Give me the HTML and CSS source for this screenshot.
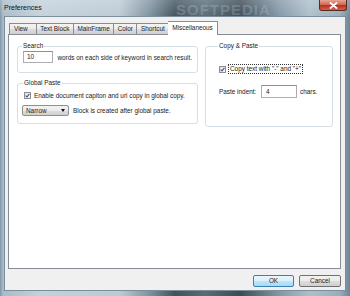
FILE: index.html
```html
<!DOCTYPE html>
<html lang="en">
<head>
  <meta charset="UTF-8">
  <title>Preferences</title>
  <link rel="stylesheet" href="styles.css">
</head>
<body>

<div class="window">
  <!-- Title bar -->
  <div class="titlebar">
    <span class="title">Preferences</span>
    <span class="watermark-top">SOFTPEDIA</span>
    <div class="close">
      <svg width="9" height="7" viewBox="0 0 9 7"><path d="M1.5 1 L7.5 6 M7.5 1 L1.5 6" stroke="#fff" stroke-width="1.8" stroke-linecap="round"/></svg>
    </div>
  </div>

  <!-- Client area -->
  <div class="client">
    <div class="tabs">
      <div class="tab tab-view">View</div>
      <div class="tab">Text Block</div>
      <div class="tab">MainFrame</div>
      <div class="tab">Color</div>
      <div class="tab">Shortcut</div>
      <div class="tab active">Miscellaneous</div>
    </div>

    <div class="panel">
      <div class="col-left">
        <fieldset class="group group-search">
          <legend>Search</legend>
          <div class="row">
            <div class="textbox tb-search">10</div>
            <span>words on each side of keyword in search result.</span>
          </div>
        </fieldset>

        <fieldset class="group group-global">
          <legend>Global Paste</legend>
          <div class="row">
            <span class="check">
              <svg width="5" height="5" viewBox="0 0 5 5"><path d="M0.6 2.6 L2 4 L4.4 0.8" fill="none" stroke="#3c5a8c" stroke-width="1.1"/></svg>
            </span>
            <span>Enable document capiton and url copy in global copy.</span>
          </div>
          <div class="row row-select">
            <div class="select">
              <span>Narrow</span>
              <span class="arrow"></span>
            </div>
            <span>Block is created after global paste.</span>
          </div>
        </fieldset>
      </div>

      <fieldset class="group group-copy">
        <legend>Copy &amp; Paste</legend>
        <div class="row">
          <span class="check">
            <svg width="5" height="5" viewBox="0 0 5 5"><path d="M0.6 2.6 L2 4 L4.4 0.8" fill="none" stroke="#3c5a8c" stroke-width="1.1"/></svg>
          </span>
          <span class="focus">Copy text with "-" and "+"</span>
        </div>
        <div class="row row-indent">
          <span class="indent-label">Paste indent:</span>
          <div class="textbox tb-indent">4</div>
          <span>chars.</span>
        </div>
      </fieldset>
    </div>

    <div class="buttons">
      <div class="btn btn-ok">OK</div>
      <div class="btn">Cancel</div>
    </div>
  </div>
</div>

</body>
</html>
```

FILE: styles.css
```css
body {
  margin: 0;
  padding: 0;
  width: 350px;
  height: 296px;
  overflow: hidden;
  font-family: 'Liberation Sans', Arial, sans-serif;
  font-size: 6.4px;
  color: #222;
}
.window {
  width: 350px;
  height: 296px;
  display: flex;
  flex-direction: column;
  box-sizing: border-box;
  background:
    linear-gradient(180deg, rgba(255,255,255,0.2) 0px, rgba(255,255,255,0) 18px),
    linear-gradient(90deg, #7f97a8 0px, #a9bbc8 3px, #c4d1db 40px, #bccad5 120px, #7d91a0 150px, #41525e 175px, #5a6c79 205px, #3b4b56 240px, #8499a8 280px, #aebfcb 310px, #98adbb 340px, #6d8596 350px);
}
.titlebar {
  height: 16px;
  display: flex;
  align-items: flex-start;
  position: relative;
  padding-left: 4px;
}
.title {
  font-size: 7px;
  margin-top: 4px;
  color: #111;
}
.watermark-top {
  position: absolute;
  left: 176px;
  top: 1px;
  font-size: 15px;
  font-weight: bold;
  letter-spacing: 1px;
  color: rgba(200,214,224,0.25);
}
.close {
  margin-left: auto;
  margin-right: 3px;
  width: 28px;
  height: 11px;
  border: 1px solid #5a2a22;
  border-top: none;
  border-radius: 0 0 3px 3px;
  box-sizing: border-box;
  background: linear-gradient(180deg, #e8a493 0%, #d06a56 45%, #b8331e 55%, #d5604a 100%);
  display: flex;
  align-items: center;
  justify-content: center;
}
.client {
  flex: 1;
  margin: 0 4px 5px 4px;
  background: #f0f0f0;
  border: 1px solid #7a8e9c;
  display: flex;
  flex-direction: column;
  padding: 4px 4px 3px 3px;
}
.tabs {
  display: flex;
  align-items: flex-end;
  height: 13px;
  padding-left: 1px;
  position: relative;
  z-index: 1;
}
.tab {
  height: 11px;
  box-sizing: border-box;
  padding: 0 3.5px;
  border: 1px solid #898c95;
  border-bottom: none;
  border-right: none;
  background: linear-gradient(180deg, #f3f3f3 0%, #ebebeb 50%, #dddddd 51%, #cfcfcf 100%);
  line-height: 10px;
  white-space: nowrap;
}
.tab-view {
  padding: 0 8px 0 4px;
}
.tab:nth-child(5) {
  border-right: 1px solid #898c95;
}
.tab.active {
  height: 14px;
  margin-bottom: -1px;
  margin-left: -1px;
  background: #fff;
  border-right: 1px solid #898c95;
  border-left: none;
  padding: 0 4px;
  line-height: 12px;
}
.panel {
  flex: 1;
  background: #fff;
  border: 1px solid #898c95;
  display: flex;
  gap: 7px;
  padding: 7px 7px 0 8px;
  align-items: flex-start;
}
.col-left {
  display: flex;
  flex-direction: column;
  gap: 6px;
  width: 181px;
}
.group {
  margin: 0;
  border: 1px solid #d5dfe5;
  border-radius: 3px;
  padding: 0 5px;
  min-inline-size: 0;
}
.group legend {
  padding: 0 1px;
  margin-left: -1px;
  line-height: 8px;
}
.group-search {
  height: 31px;
  box-sizing: border-box;
  padding-top: 1px;
}
.group-global {
  height: 45px;
  box-sizing: border-box;
  padding-top: 5px;
  padding-left: 6px;
}
.group-copy {
  width: 129px;
  height: 85px;
  box-sizing: border-box;
  padding-top: 15px;
  padding-left: 13px;
}
.row {
  display: flex;
  align-items: center;
  gap: 3px;
  white-space: nowrap;
}
.textbox {
  box-sizing: border-box;
  background: #fff;
  border: 1px solid #abadb3;
  border-top-color: #8e9096;
  padding-left: 3px;
  line-height: 10px;
}
.tb-search {
  width: 35px;
  height: 12px;
  margin-right: 1px;
}
.check {
  width: 7px;
  height: 7px;
  box-sizing: border-box;
  border: 1px solid #8f8f8f;
  background: linear-gradient(135deg, #dcdcdc, #fafafa);
  display: flex;
  align-items: center;
  justify-content: center;
}
.row-select {
  margin-top: 6px;
  margin-left: -2px;
  gap: 4px;
}
.select {
  width: 47px;
  height: 11px;
  box-sizing: border-box;
  border: 1px solid #8e8f8f;
  border-radius: 2px;
  background: linear-gradient(180deg, #f2f2f2 0%, #ebebeb 50%, #dddddd 51%, #cfcfcf 100%);
  display: flex;
  align-items: center;
  padding: 0 3px;
}
.arrow {
  margin-left: auto;
  border-left: 2.5px solid transparent;
  border-right: 2.5px solid transparent;
  border-top: 3px solid #111;
}
.focus {
  outline: 1px dotted #333;
  padding: 0 1px;
  line-height: 8px;
}
.row-indent {
  margin-top: 12px;
  gap: 0;
}
.indent-label {
  width: 42px;
}
.tb-indent {
  width: 36px;
  height: 13px;
  margin-right: 3px;
  padding-left: 4px;
  line-height: 11px;
}
.buttons {
  display: flex;
  justify-content: flex-end;
  gap: 5px;
  padding-top: 6px;
}
.btn {
  width: 42px;
  height: 12px;
  box-sizing: border-box;
  border: 1px solid #707070;
  border-radius: 2px;
  background: linear-gradient(180deg, #f2f2f2 0%, #ebebeb 50%, #dddddd 51%, #cfcfcf 100%);
  text-align: center;
  line-height: 10px;
}
.btn-ok {
  width: 41px;
  border-color: #3c7fb1;
  background: linear-gradient(180deg, #eaf6fd 0%, #d9f0fc 50%, #bee6fd 51%, #a7d9f5 100%);
}
```
